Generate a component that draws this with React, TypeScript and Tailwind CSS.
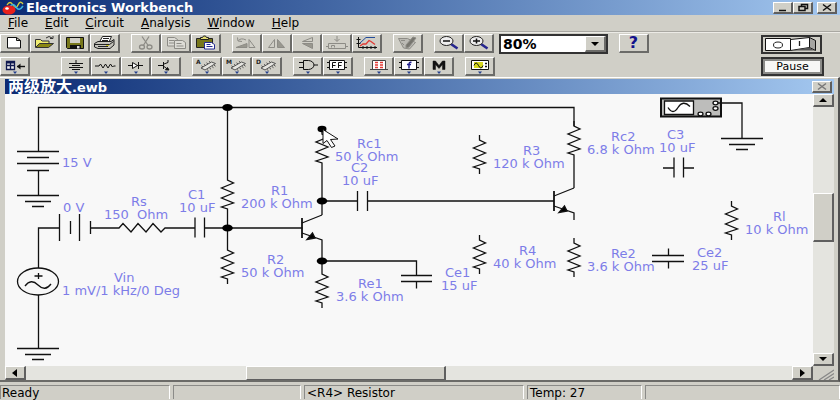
import React, { useState } from "react";

const BUTTON =
  "flex h-[19px] w-[30px] shrink-0 items-center justify-center border-t border-r-2 border-b-2 border-l border-t-white border-r-[#6b6b68] border-b-[#6b6b68] border-l-white bg-[#d0cfc7]";
const SCROLL_BUTTON =
  "flex shrink-0 items-center justify-center border-t border-r-2 border-b-2 border-l border-t-white border-r-[#5f5f5f] border-b-[#5f5f5f] border-l-white bg-[#d0cfc7]";
const TRACK = "bg-[#e4e4df]";

const MENUS = ["File", "Edit", "Circuit", "Analysis", "Window", "Help"];

const Chip = ({ letter }: { letter: string }) => (
  <g fill="none" stroke="#444" strokeWidth="0.900">
    <path d="M8 10 18.500 4l4 1.500L12 12Z" fill="#e4e4df" />
    <path d="M10 9 8.500 7.800M12.500 7.500 11 6.300M15 6 13.500 4.800M17.500 4.500 16 3.300M14 11.500l1.500 1.200M16.500 10l1.500 1.200M19 8.500l1.500 1.200M21 7l1.500 1.200" />
    <text x="3" y="6" fontSize="6" fontWeight="bold" fill="#222" stroke="none" fontFamily="DejaVu Sans, sans-serif">
      {letter}
    </text>
  </g>
);

const ICONS: Record<string, React.ReactNode> = {
  New: <path d="M6.500 2.500h9l4 3v7.500h-13ZM15.500 2.500v3h4" fill="#fff" stroke="#111" />,
  Open: (
    <g stroke="#333">
      <path d="M4.500 12V4.500h5l1.500 1.500h7v2" fill="#f0ed70" />
      <path d="M4.500 12.500 8.500 8.500h14l-5 4Z" fill="#8a8712" />
      <path d="M15 3q3-3 6 0M22 1v2.500h-3" fill="none" />
    </g>
  ),
  Save: (
    <g>
      <path d="M5.500 2.500h17v11h-16l-1-1Z" fill="#77771a" stroke="#111" />
      <path d="M9 3h10v5H9Z" fill="#d0cfc7" />
      <path d="M9 10h11v3.500H9Z" fill="#111" />
      <path d="M16 11h2.500v2.500H16Z" fill="#ddd" />
    </g>
  ),
  Print: (
    <g stroke="#222">
      <path d="M8.500 7 11.500 1.500h9L18 7" fill="#fff" />
      <path d="M3.500 8.500 7 6.500h13l3-2v5.500l-4 3.500h-12l-3.500-1.500Z" fill="#c4c3bb" />
      <path d="M4 9.500h14.500l4-3M7 11.500h10M12 3.500h6M11 5.500h6" fill="none" />
      <path d="M15 10.500h3" stroke="#c9c020" />
    </g>
  ),
  Cut: (
    <g fill="none" stroke="#8d8c86" strokeWidth="1.300">
      <path d="M10 1.500 16.500 11M17 1.500 11 11" />
      <ellipse cx="10" cy="12" rx="2.500" ry="2" />
      <ellipse cx="17.500" cy="12" rx="2.500" ry="2" />
    </g>
  ),
  Copy: (
    <g fill="#dddcd6" stroke="#8d8c86">
      <path d="M5.500 2.500h7l3 2v6.500h-10ZM7 5.500h5M7 8h6" />
      <path d="M12.500 5.500h8l3 2v6h-11ZM14.500 8.500h5M14.500 11h7" />
    </g>
  ),
  Paste: (
    <g>
      <path d="M4.500 3.500h16v9h-16Z" fill="#77771a" stroke="#222" />
      <path d="M8.500 4.500V2.500h2l1-1.500h2l1 1.500h2v2Z" fill="#e2dc72" stroke="#222" />
      <path d="M12.500 7.500h7l3 2v4.500h-10Z" fill="#fff" stroke="#242a91" />
      <path d="M14.500 9.500h4M14.500 11.500h6" stroke="#242a91" />
    </g>
  ),
  Rotate: (
    <g fill="none" stroke="#8d8c86">
      <path d="M16 12.500V4.500l6 8Z" />
      <path d="M3 12.500h11V8.500Z" fill="#99988f" />
      <path d="M13 5Q8 2.500 5.500 5.500M4.500 2.500l.5 3.500 4 .5" />
    </g>
  ),
  "Flip Horizontal": (
    <g stroke="#8d8c86">
      <path d="M11.500 4.500v8h-6Z" fill="none" />
      <path d="M14.500 4.500v8h7Z" fill="#99988f" />
    </g>
  ),
  "Flip Vertical": (
    <g stroke="#8d8c86">
      <path d="M19.500 2.500v4h-10Z" fill="none" />
      <path d="M9.500 8.500h10v5Z" fill="#99988f" />
    </g>
  ),
  "Create Subcircuit": (
    <g fill="none" stroke="#8d8c86">
      <path d="M14 1v5M11.500 4l2.500 2.500L16.500 4M5.500 8.500h17v5h-17ZM3 11.500h2.500M22.500 11.500H25" />
      <path d="M8.500 12.500v-2h3v2" />
    </g>
  ),
  "Display Graphs": (
    <g fill="none">
      <path d="M5.500 2v10.500H24M3.500 4.500h4M3.500 8.500h4M10 11v3M14 11v3M18 11v3M22 11v3" stroke="#111" />
      <path d="m7 8 6-5.500h9" stroke="#234c9a" />
      <path d="m7 11 3-2h3l3-3.500 2 1 4 3" stroke="#e23b35" strokeWidth="1.300" />
    </g>
  ),
  Properties: (
    <g fill="#bbbab4" stroke="#8d8c86">
      <path d="M4.500 3.500h9l8 4-6 6.500-6-1Z" />
      <path d="m12 10 7-8 3 1-7 9-3 1Z" fill="#77766f" />
      <path d="M7 5.500h4M8 8l2 2" />
    </g>
  ),
  "Zoom Out": (
    <g>
      <path d="m16 9 6.500 4.500" stroke="#25258e" strokeWidth="2.600" />
      <ellipse cx="11.500" cy="6" rx="6.500" ry="4.500" fill="#eee" stroke="#222" />
      <path d="M8 6h7" stroke="#111" strokeWidth="1.500" />
    </g>
  ),
  "Zoom In": (
    <g>
      <path d="m16 9 6.500 4.500" stroke="#25258e" strokeWidth="2.600" />
      <ellipse cx="11.500" cy="6" rx="6.500" ry="4.500" fill="#eee" stroke="#222" />
      <path d="M8 6h7M11.500 3.500v5" stroke="#111" strokeWidth="1.500" />
    </g>
  ),
  Favorites: (
    <g>
      <path d="M5.500 3.500h8v8h-8ZM5.500 7.500h8M9.500 3.500v8" fill="#eee" stroke="#111a50" strokeWidth="1.300" />
      <path d="M5 3h9v2.500H5Z" fill="#111a50" />
      <path d="M16 8.500h8" stroke="#111" strokeWidth="1.400" />
      <path d="m19.500 5.500-3.500 3 3.500 3Z" fill="#111" />
    </g>
  ),
  Sources: <path d="M14 2v3M7 5.500h14M10 7.500h8M7 9.500h14M10 11.500h8" fill="none" stroke="#111" />,
  Basic: <path d="M3 8h4l1.500-2 2.500 4 2.500-4 2.500 4 2.500-4 2 3 1-1h2" fill="none" stroke="#111" />,
  Diodes: (
    <g stroke="#111">
      <path d="M6 7.500h15M16.500 4v7" />
      <path d="M10.500 4.500v6l5-3Z" fill="#fff" />
    </g>
  ),
  Transistors: (
    <g stroke="#111" fill="none">
      <path d="M6 7.500h5M11.500 4v7M12 6l4-1.500V2M12 8.500l4 3" />
      <path d="m17 12-3.500-.2 2-2.300Z" fill="#111" />
    </g>
  ),
  "Analog ICs": <Chip letter="A" />,
  "Mixed ICs": <Chip letter="M" />,
  "Digital ICs": <Chip letter="D" />,
  "Logic Gates": (
    <path d="M5 4.500h5M5 9.500h5M9.500 2.500h5q5 .5 5.500 4.500-.5 4-5.500 4.500h-5ZM20 7h4" fill="none" stroke="#111" />
  ),
  Digital: (
    <g stroke="#111">
      <path d="M3 4.500h20M3 9.500h20" />
      <path d="M5.500 2.500h15v9h-15Z" fill="#fff" />
      <path d="M8.500 10V4.500h3.500M8.500 7.500h3M14.500 10V4.500h3.500M14.500 7.500h3" fill="none" />
    </g>
  ),
  Indicators: (
    <g>
      <path d="M7.500 2.500h13v9h-13Z" fill="#fff" stroke="#444" />
      <path d="M5 11.500h18" stroke="#444" />
      <path d="M10 4.500h3M15 4.500h3M10 7h3M15 7h3M10 9.500h3M15 9.500h3" stroke="#e23b35" strokeWidth="1.500" />
    </g>
  ),
  Controls: (
    <g stroke="#111">
      <path d="M4 4.500h20M4 9.500h20" />
      <path d="M6.500 2.500h15v9h-15Z" fill="#fff" />
      <path d="M16.500 4.500q-2.500-1-2.500 2v4M12 6.500h4" fill="none" stroke="#23238e" strokeWidth="1.500" />
    </g>
  ),
  Miscellaneous: <path d="M8 11.500V3h2.500l3.500 4.500L17.500 3H20v8.500h-2.500V6.500L14 10.500l-3.500-4v5Z" fill="#111" stroke="#111" strokeWidth="0.500" />,
  Instruments: (
    <g>
      <path d="M5.500 2.500h17v9h-17Z" fill="#fff" stroke="#111" />
      <path d="M8 4h9v6H8Z" fill="#d5d71d" />
      <path d="M8 7.500q2-5 4.500 0t4.500 0" fill="none" stroke="#111" />
      <path d="M19 5.500h2M19 8.500h2" stroke="#111" strokeWidth="1.500" />
    </g>
  ),
};

const TOOLS = [
  ["New", "Open", "Save", "Print"],
  ["Cut", "Copy", "Paste"],
  ["Rotate", "Flip Horizontal", "Flip Vertical", "Create Subcircuit", "Display Graphs"],
  ["Properties"],
  ["Zoom Out", "Zoom In"],
];

const PARTS = [
  ["Sources", "Basic", "Diodes", "Transistors"],
  ["Analog ICs", "Mixed ICs", "Digital ICs"],
  ["Logic Gates", "Digital"],
  ["Indicators", "Controls", "Miscellaneous"],
  ["Instruments"],
];

const ToolButton = ({ name, menu = false }: { name: string; menu?: boolean }) => (
  <button type="button" aria-label={name} title={name} className={BUTTON}>
    <svg width="28" height="16" viewBox="0 0 28 16" className="shrink-0">
      {ICONS[name]}
      {menu && <path d="M12 13.500h4l-2 2.500Z" fill="#24408e" />}
    </svg>
  </button>
);

// Circuit parts, drawn on the sheet's own grid
const Resistor = ({ x, y }: { x: number; y: number }) => (
  <path d={`M${x} ${y - 5}v5l6 3-12 5 12 5-12 5 12 5-12 4 6 2v5`} />
);

const Ground = ({ x, y }: { x: number; y: number }) => (
  <path d={`M${x - 21} ${y}h42M${x - 13} ${y + 6}h26M${x - 6} ${y + 11}h12`} />
);

const Transistor = ({ x, y }: { x: number; y: number }) => (
  <g>
    <path d={`M${x} ${y - 10}v20`} strokeWidth="1.800" />
    <path d={`M${x} ${y - 5}l20-8M${x} ${y + 5}l20 7v7`} />
    <path d={`M${x + 13} ${y + 10}l-8 1.500 5.500-6.500Z`} fill="#000" />
  </g>
);

const RESISTORS = [
  [227.5, 180], [227.5, 250], [322, 134], [322, 274], [479.5, 140],
  [479.5, 240], [574, 126], [574, 243], [731.5, 206],
];

const NODES = [[227.5, 107.5], [227.5, 228], [322, 201], [322, 261]];

// x is the left edge of the value, nameX the left edge of the name above it
const LABELS = [
  { name: "Rs", nameX: 131, value: "150  Ohm", x: 104, y: 219 },
  { name: "C1", nameX: 188, value: "10 uF", x: 179, y: 212 },
  { name: "R1", nameX: 271, value: "200 k Ohm", x: 241, y: 208 },
  { name: "Rc1", nameX: 357, value: "50 k Ohm", x: 335, y: 161 },
  { name: "C2", nameX: 351, value: "10 uF", x: 342, y: 185 },
  { name: "R2", nameX: 267, value: "50 k Ohm", x: 241, y: 277 },
  { name: "Re1", nameX: 358, value: "3.6 k Ohm", x: 336, y: 301 },
  { name: "Ce1", nameX: 445, value: "15 uF", x: 441, y: 290 },
  { name: "R3", nameX: 523, value: "120 k Ohm", x: 493, y: 168 },
  { name: "R4", nameX: 519, value: "40 k Ohm", x: 493, y: 268 },
  { name: "Rc2", nameX: 611, value: "6.8 k Ohm", x: 587, y: 154 },
  { name: "Re2", nameX: 611, value: "3.6 k Ohm", x: 587, y: 271 },
  { name: "C3", nameX: 667, value: "10 uF", x: 659, y: 152 },
  { name: "Rl", nameX: 773, value: "10 k Ohm", x: 745, y: 234 },
  { name: "Ce2", nameX: 697, value: "25 uF", x: 692, y: 270 },
  { name: "Vin", nameX: 114, value: "1 mV/1 kHz/0 Deg", x: 62, y: 295 },
  { name: "", nameX: 0, value: "15 V", x: 62, y: 167 },
  { name: "", nameX: 0, value: "0 V", x: 63, y: 212 },
];

const Schematic = () => (
  <svg width="808" height="271" viewBox="5 94 808 271" role="img" aria-label="Two-stage amplifier" className="shrink-0">
    <g fill="none" stroke="#111" strokeWidth="1.300">
      {/* supply rail and battery */}
      <path d="M38.500 151.500V107.500H574V126M17 151.500h42M27 157.500h22M17 163.500h42M27 170.500h22M38.500 170.500v25" />
      <Ground x={38} y={195.5} />

      {/* input branch */}
      <path d="M38.500 268V228h21M59.500 214v27M70.500 221v13M79.500 214v27M90.500 221v13M90.500 228H119l4-4.500 8 8.500 7-8.500 8 8.500 7-8.500 8 8.500 4-4h30M195 217.500v20M204.500 217.500v20M204.500 228h98M38.500 295v53.500" />
      <ellipse cx="38" cy="281.500" rx="20.500" ry="13.500" />
      <path d="M38.500 273v6M34.500 276h8M25 286q6-8 13-1t13-1" />
      <Ground x={38} y={348.5} />

      {/* first stage */}
      <path d="M227.500 107.500V175M227.500 214v31M322 168v47M322 247v22M322 201h35.500M357.500 191v20M367.500 191v20M367.500 201H554M322 261h94.500v14.500M401 275.500h31M401 281.500h31M416.500 281.500v7" />
      <Transistor x={302} y={228} />

      {/* second stage */}
      <path d="M574 160v28" />
      <Transistor x={554} y={201} />

      {/* loose parts */}
      <path d="M663 168h11M674 157.500v20M683.500 157.500v20M683.500 168H694M668.500 248.500v7M652 255.500h32M652 261.500h32M668.500 261.500v7" />
      {RESISTORS.map(([x, y]) => (
        <Resistor key={`${x}-${y}`} x={x} y={y} />
      ))}

      {/* oscilloscope */}
      <path d="M661 98.500h60v18h-60Z" fill="#bdbdbb" strokeWidth="2" />
      <path d="M664.500 101h29v13.500h-29Z" fill="#fff" />
      <path d="M668 107.500q5 8 10 0t12-1" />
      <g fill="#fff">
        <ellipse cx="715.500" cy="103" rx="2.500" ry="1.800" />
        <ellipse cx="715.500" cy="108.500" rx="2.500" ry="1.800" />
        <ellipse cx="700.500" cy="114" rx="2.500" ry="1.800" />
        <ellipse cx="708.500" cy="114" rx="2.500" ry="1.800" />
      </g>
      <path d="M718 103h24v35.500" />
      <Ground x={742} y={138.5} />
    </g>

    {NODES.map(([x, y]) => (
      <ellipse key={`${x}-${y}`} cx={x} cy={y} rx="5.300" ry="3.500" />
    ))}
    <ellipse cx="322" cy="129" rx="4.500" ry="3.200" />

    <g fill="#7d7de8" fontSize="13" fontFamily="DejaVu Sans, Liberation Sans, sans-serif">
      {LABELS.map((l) => (
        <g key={`${l.x}-${l.y}`}>
          {l.name && (
            <text x={l.nameX} y={l.y - 13}>
              {l.name}
            </text>
          )}
          <text x={l.x} y={l.y} className="whitespace-pre">
            {l.value}
          </text>
        </g>
      ))}
    </g>

    {/* pointer */}
    <path d="M323 129.500v14l4-3 4.500 7 3.500-1.500-4.500-6.500 7.500-.5Z" fill="#fff" stroke="#111" />
  </svg>
);

const WindowButton = ({ name, children }: { name: string; children: React.ReactNode }) => (
  <button
    type="button"
    aria-label={name}
    className="flex h-3 w-5 items-center justify-center border-t border-r-2 border-b-2 border-l border-t-white border-r-[#5f5f5f] border-b-[#5f5f5f] border-l-white bg-[#d0cfc7]"
  >
    <svg width="12" height="9" viewBox="0 0 12 9" fill="none" stroke="#111" strokeWidth="1.500" className="shrink-0">
      {children}
    </svg>
  </button>
);

const Arrow = ({ d }: { d: string }) => (
  <svg width="10" height="8" viewBox="0 0 10 8" className="shrink-0">
    <path d={d} fill="#000" />
  </svg>
);

const App = () => {
  const [zoom, setZoom] = useState("80%");

  return (
    <div className="flex min-h-screen w-full flex-col overflow-hidden bg-[#d0cfc7] font-['DejaVu_Sans','Noto_Sans_CJK_SC',sans-serif] text-xs text-black">
      <header className="flex h-[15px] items-center bg-linear-to-r from-[#0b2a73] to-[#a4c8f0] pr-[3px] pl-[2px] text-white">
        <svg width="23" height="14" viewBox="0 0 23 14" className="shrink-0">
          <path d="M5 4q3-5 6 0t5 0 5-1" fill="none" stroke="#d5d13c" strokeWidth="1.300" />
          <path d="M8 6q3-5 6 0t7-1" fill="none" stroke="#38b6e8" strokeWidth="1.500" />
          <ellipse cx="7" cy="9" rx="6.500" ry="4.500" fill="#e8211c" />
          <ellipse cx="5" cy="7.500" rx="1.800" ry="1.200" fill="#fff" />
        </svg>
        <h1 className="ml-px flex-1 text-[13px] leading-[15px] font-bold whitespace-nowrap">Electronics Workbench</h1>
        <div className="flex">
          <WindowButton name="Minimize">
            <path d="M2 7.500h7" />
          </WindowButton>
          <WindowButton name="Restore">
            <path d="M4.500 3V1.500h6v4h-2M2 3.500h6v4H2Z" />
          </WindowButton>
        </div>
        <div className="ml-1">
          <WindowButton name="Close">
            <path d="m2 1.500 8 6M10 1.500l-8 6" />
          </WindowButton>
        </div>
      </header>

      <nav className="flex h-[17px] items-center gap-px border-b border-[#a9a8a2]">
        {MENUS.map((menu) => (
          <button key={menu} type="button" className="px-2 leading-4">
            <span className="underline">{menu[0]}</span>
            {menu.slice(1)}
          </button>
        ))}
      </nav>

      <div className="flex justify-between border-t border-[#ecebe6] pt-px pr-4">
        <div className="flex flex-col gap-[3px]">
          <div className="flex gap-[11px]">
            {TOOLS.map((group) => (
              <div key={group[0]} className="flex">
                {group.map((name) => (
                  <ToolButton key={name} name={name} />
                ))}
              </div>
            ))}
            <div className="relative -ml-[6px] h-5 w-[109px] border-2 border-[#333] bg-white">
              <select
                aria-label="Zoom"
                value={zoom}
                onChange={(e) => setZoom(e.target.value)}
                className="block h-4 w-full appearance-none pl-[2px] text-[14px] leading-4 font-bold"
              >
                <option>50%</option>
                <option>80%</option>
                <option>100%</option>
              </select>
              <span className="pointer-events-none absolute top-0 right-0 flex h-4 w-[21px] items-center justify-center border-t border-r-2 border-b-2 border-l border-t-white border-r-[#6b6b68] border-b-[#6b6b68] border-l-white bg-[#d0cfc7]">
                <Arrow d="M1 2h8L5 6Z" />
              </span>
            </div>
            <button type="button" aria-label="Help" className={`${BUTTON} text-[16px] leading-4 font-bold text-[#12128c]`}>
              ?
            </button>
          </div>

          <div className="flex gap-[11px]">
            <div className="mr-5 flex">
              <ToolButton name="Favorites" menu />
            </div>
            {PARTS.map((group) => (
              <div key={group[0]} className="flex">
                {group.map((name) => (
                  <ToolButton key={name} name={name} menu />
                ))}
              </div>
            ))}
          </div>
        </div>

        <div className="flex flex-col gap-[3px] pt-px">
          <button type="button" aria-label="Activate simulation" className="h-[19px] w-[61px] border-2 border-[#333] bg-[#d0cfc7]">
            <svg width="57" height="15" viewBox="0 0 57 15" className="block">
              <path d="M2.500 1.500h25v12h-25Z" fill="#fff" stroke="#111" />
              <path d="m27.500 2.500 19-2v10l-19 3Z" fill="#fff" stroke="#111" />
              <path d="m46.500.5 6 3v10l-6-3Z" fill="#a5a5a2" stroke="#111" />
              <path d="m29 13.500 17-3 6 3Z" fill="#555" />
              <ellipse cx="15" cy="8" rx="4.500" ry="3" fill="none" stroke="#222" />
              <path d="M36.500 4v5" stroke="#222" strokeWidth="1.300" />
            </svg>
          </button>
          <button type="button" className="h-[19px] w-[63px] border-2 border-[#333] bg-[#8b8b88] p-[2px]">
            <span className="block bg-[#f7f7f5] text-[11px] leading-[11px]">Pause</span>
          </button>
        </div>
      </div>

      <main className="mt-px flex flex-1 flex-col border-t border-r-2 border-b-2 border-t-white border-r-[#4f4f4f] border-b-[#6b6b68] pt-px pr-1 pl-[5px]">
        <div className="flex h-[15px] items-center justify-between bg-linear-to-r from-[#0b2a73] to-[#a4c8f0] pr-[2px] pl-[3px] text-white">
          <h2 className="text-[16px] leading-[15px] font-bold whitespace-nowrap">
            两级放大<span className="text-[13px]">.ewb</span>
          </h2>
          <WindowButton name="Close document">
            <path d="m2 1.500 8 6M10 1.500l-8 6" stroke="#777" />
          </WindowButton>
        </div>

        <div className="flex flex-1">
          <div className="flex min-w-0 flex-1 flex-col overflow-hidden bg-[#f8f8f8]">
            <div className="flex flex-1 overflow-hidden">
              <Schematic />
            </div>
            <div className={`flex h-[14px] ${TRACK}`}>
              <button type="button" aria-label="Scroll left" className={`${SCROLL_BUTTON} w-[21px]`}>
                <Arrow d="M7 0v8L2 4Z" />
              </button>
              <div className="grow-[221]" />
              <div className="grow-[198] border-t border-r-2 border-b border-l border-t-white border-r-[#5f5f5f] border-b-[#5f5f5f] border-l-white bg-[#d0cfc7]" />
              <div className="grow-[348]" />
              <button type="button" aria-label="Scroll right" className={`${SCROLL_BUTTON} w-[21px]`}>
                <Arrow d="M3 0v8l5-4Z" />
              </button>
            </div>
          </div>

          <div className={`flex w-[21px] shrink-0 flex-col ${TRACK}`}>
            <button type="button" aria-label="Scroll up" className={`${SCROLL_BUTTON} h-[13px]`}>
              <Arrow d="M1 6h8L5 2Z" />
            </button>
            <div className="grow-[86]" />
            <div className="grow-[47] border-t border-r-2 border-b-2 border-l border-t-white border-r-[#5f5f5f] border-b-[#5f5f5f] border-l-white bg-[#d0cfc7]" />
            <div className="grow-[111]" />
            <button type="button" aria-label="Scroll down" className={`${SCROLL_BUTTON} h-[13px]`}>
              <Arrow d="M1 2h8L5 6Z" />
            </button>
            <div className="flex h-[14px] items-end justify-end bg-[#d0cfc7]">
              <svg width="16" height="11" viewBox="0 0 16 11" stroke="#888" strokeWidth="1.300">
                <path d="M1 11 16 1M6 11l10-6.500M11 11l5-3" />
              </svg>
            </div>
          </div>
        </div>
      </main>

      <footer className="mt-[3px] mb-px flex h-[14px] gap-[3px] leading-[14px] whitespace-nowrap">
        <div className="w-[170px] border-t border-r border-l border-[#8b8b88] border-r-white pl-px">Ready</div>
        <div className="w-32 border-t border-r border-l border-[#8b8b88] border-r-white" />
        <div className="w-[220px] border-t border-r border-l border-[#8b8b88] border-r-white pl-[2px]">&lt;R4&gt; Resistor</div>
        <div className="w-[115px] border-t border-r border-l border-[#8b8b88] border-r-white pl-[2px]">Temp: 27</div>
        <div className="flex-1 border-t border-r border-l border-[#8b8b88] border-r-white" />
      </footer>
    </div>
  );
};

export default App;
